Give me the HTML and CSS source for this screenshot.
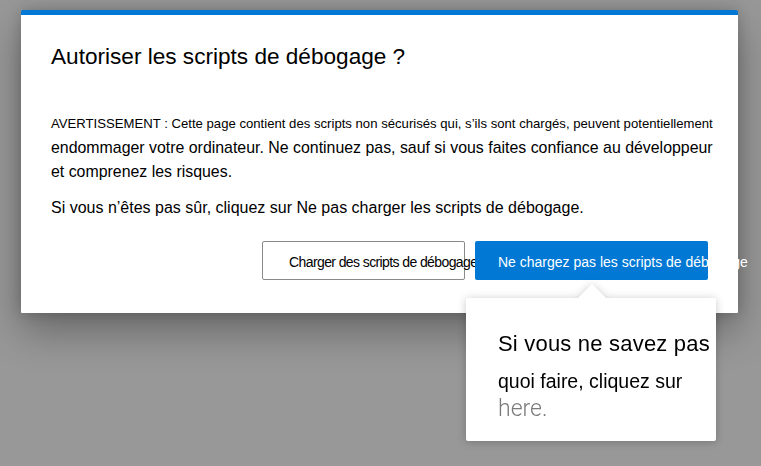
FILE: index.html
```html
<!DOCTYPE html>
<html lang="fr">
<head>
<meta charset="utf-8">
<title>Autoriser les scripts de débogage ?</title>
<link rel="stylesheet" href="styles.css">
</head>
<body>
<div class="dialog">
  <h1 class="title">Autoriser les scripts de débogage ?</h1>
  <p class="warning"><span class="warning-lead">AVERTISSEMENT : Cette page contient des scripts non sécurisés qui, s’ils sont chargés, peuvent potentiellement</span>endommager votre ordinateur. Ne continuez pas, sauf si vous faites confiance au développeur et comprenez les risques.</p>
  <p class="hint">Si vous n’êtes pas sûr, cliquez sur Ne pas charger les scripts de débogage.</p>
  <div class="actions">
    <button class="btn btn-secondary" type="button">Charger des scripts de débogage</button>
    <button class="btn btn-primary" type="button">Ne chargez pas les scripts de débogage</button>
  </div>
</div>
<div class="callout">
  <span class="callout-l1">Si vous ne savez pas</span>
  <span class="callout-l2">quoi faire, cliquez sur</span>
  <a class="callout-link" href="#">here.</a>
</div>
</body>
</html>
```

FILE: styles.css
```css
html, body {
  margin: 0;
  height: 100%;
}
body {
  background: #989898;
  padding: 10px 0 0 21px;
  box-sizing: border-box;
  font-family: "Liberation Sans", Arial, sans-serif;
  color: #000;
  overflow: hidden;
  position: relative;
}
.dialog {
  width: 717px;
  box-sizing: border-box;
  background: #fff;
  border-top: 5px solid #0078d4;
  border-radius: 2px 2px 1px 1px;
  padding: 28px 15px 33px 30px;
  box-shadow: 0 18px 40px rgba(0, 0, 0, 0.32), 0 0 14px rgba(0, 0, 0, 0.18);
}
.title {
  margin: 0;
  font-size: 22.6px;
  line-height: 28px;
  font-weight: normal;
}
.warning {
  margin: 40.5px 0 0;
  font-size: 15.9px;
  line-height: 24px;
}
.warning-lead {
  display: block;
  font-size: 13.15px;
  line-height: 24px;
  white-space: nowrap;
}
.hint {
  margin: 12px 0 0;
  font-size: 16px;
  line-height: 24px;
}
.actions {
  margin: 21.5px 15px 0 0;
  display: flex;
  justify-content: flex-end;
  gap: 10px;
}
.btn {
  height: 39px;
  box-sizing: border-box;
  border-radius: 2px;
  font-family: "Liberation Sans", Arial, sans-serif;
  font-size: 14px;
  white-space: nowrap;
  display: flex;
  align-items: center;
  justify-content: flex-start;
  overflow: visible;
  margin: 0;
}
.btn-secondary {
  width: 203px;
  padding: 2px 0 0 26px;
  background: #fff;
  border: 1px solid #8a8a8a;
  color: #000;
  letter-spacing: -0.6px;
}
.btn-primary {
  width: 233px;
  padding: 2px 0 0 23px;
  background: #0078d4;
  border: 0;
  color: #fff;
}
.callout {
  position: absolute;
  left: 466px;
  top: 298px;
  width: 250px;
  height: 143px;
  box-sizing: border-box;
  padding: 31.4px 0 0 32px;
  background: #fff;
  border-radius: 2px;
  filter: drop-shadow(0 1px 4px rgba(0, 0, 0, 0.22));
}
.callout::before {
  content: "";
  position: absolute;
  left: 112px;
  top: -14px;
  width: 28px;
  height: 14px;
  background: #fff;
  clip-path: polygon(50% 0, 100% 100%, 0 100%);
}
.callout-l1 {
  display: block;
  font-size: 22px;
  line-height: 30px;
  letter-spacing: 0.2px;
  white-space: nowrap;
}
.callout-l2 {
  display: block;
  margin-top: 6.85px;
  font-size: 19.5px;
  line-height: 30px;
  white-space: nowrap;
}
.callout-link {
  display: block;
  font-family: Roboto, "Liberation Sans", sans-serif;
  font-weight: 300;
  font-size: 23px;
  line-height: 26px;
  color: #7a7a7a;
  text-decoration: none;
}
```
